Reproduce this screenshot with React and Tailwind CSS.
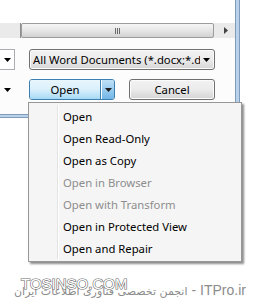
import React from 'react';

const menuItems = [
  { label: 'Open', disabled: false },
  { label: 'Open Read-Only', disabled: false },
  { label: 'Open as Copy', disabled: false },
  { label: 'Open in Browser', disabled: true },
  { label: 'Open with Transform', disabled: true },
  { label: 'Open in Protected View', disabled: false },
  { label: 'Open and Repair', disabled: false },
];

function Caret({ className = '' }) {
  return (
    <svg width="7" height="4" viewBox="0 0 7 4" className={className}>
      <path d="M0 0h7L3.5 4z" fill="currentColor" />
    </svg>
  );
}

export default function App() {
  return (
    <div className="relative h-[306px] w-[261px] overflow-hidden bg-white font-['Noto_Sans',sans-serif] text-[11.3px] leading-none text-black">
      {/* dialog window */}
      <div className="flex w-[240px]">
        <div className="w-[235px] bg-[#fcfcfc]">
          <div className="h-[23px] bg-white" />

          {/* horizontal scrollbar */}
          <div className="flex h-[15px] bg-[#eaeaea]">
            <div className="w-[21px] border-r border-[#8e8e8e]" />
            <div className="flex w-[193px] items-center justify-center rounded-[2px] border border-[#9c9c9c] bg-gradient-to-b from-[#f6f6f6] via-[#e6e6e6] to-[#d2d2d2]">
              <div className="flex gap-[1px]">
                <div className="h-[6px] w-[1px] bg-[#6a6a6a]" />
                <div className="h-[6px] w-[1px] bg-[#6a6a6a]" />
                <div className="h-[6px] w-[1px] bg-[#6a6a6a]" />
              </div>
            </div>
            <div className="flex flex-1 items-center justify-center pl-[2px]">
              <svg width="4" height="7" viewBox="0 0 4 7">
                <path d="M0 0v7l4-3.5z" fill="#444" />
              </svg>
            </div>
          </div>

          {/* file type row */}
          <div className="mt-[11px] flex h-[21px] items-center">
            <div className="flex h-[21px] w-[15px] items-center justify-center border-y border-r border-[#abadb3] bg-white">
              <Caret className="text-black" />
            </div>
            <div className="ml-[14px] flex h-[21px] w-[186px] items-center rounded-[3px] border border-[#707070] bg-gradient-to-b from-[#f3f3f3] via-[#ebebeb] to-[#d6d6d6] pl-[3px] pr-[4px] shadow-[inset_0_0_0_1px_#fbfbfb]">
              <span className="flex-1 overflow-hidden whitespace-nowrap">All Word Documents (*.docx;*.docm;*.dotx)</span>
              <Caret className="ml-[3px] text-black" />
            </div>
          </div>

          {/* buttons row */}
          <div className="mt-[9px] flex h-[21px] items-center">
            <div className="flex w-[15px] justify-center">
              <Caret className="text-black" />
            </div>
            <div className="ml-[14px] flex h-[21px] w-[86px] overflow-hidden rounded-[3px] border border-[#3c7fb1] shadow-[inset_0_0_0_1px_#c4e5f6]">
              <div className="flex flex-1 items-center justify-center bg-gradient-to-b from-[#eaf6fd] via-[#d9f0fc] to-[#a7d9f5]">
                Open
              </div>
              <div className="w-[1px] bg-[#3c7fb1]" />
              <div className="w-[1px] bg-white" />
              <div className="flex w-[12px] items-center justify-center bg-gradient-to-b from-[#bfe1f6] to-[#72b6e6]">
                <Caret className="text-[#1d1d1d]" />
              </div>
            </div>
            <div className="ml-[14px] flex h-[21px] w-[86px] items-center justify-center rounded-[3px] border border-[#707070] bg-gradient-to-b from-[#f2f2f2] via-[#ebebeb] to-[#d4d4d4] shadow-[inset_0_0_0_1px_#fcfcfc]">
              Cancel
            </div>
          </div>

          <div className="h-[14px]" />
        </div>
        <div className="w-[5px] border-x border-[#7f9db9] bg-[#b9d1ea]" />
      </div>
      <div className="h-[4px] w-[240px] border-y border-[#7f9db9] bg-[#b9d1ea]" />

      {/* split button dropdown menu */}
      <div className="absolute left-[28px] top-[102px] w-[214px] border border-[#979797] bg-[#f5f5f5] pb-[1px] pt-[3px] shadow-[2px_2px_2px_rgba(0,0,0,0.45)]">
        <div className="absolute bottom-[2px] left-[28px] top-[2px] w-[1px] bg-[#e2e3e3]" />
        <div className="absolute bottom-[2px] left-[29px] top-[2px] w-[1px] bg-white" />
        {menuItems.map((item) => (
          <div
            key={item.label}
            className={`flex h-[22px] items-center pl-[34px] ${item.disabled ? 'text-[#8d8d8d]' : 'text-black'}`}
          >
            {item.label}
          </div>
        ))}
      </div>

      {/* watermark */}
      <div className="absolute left-[14px] top-[283px] flex items-baseline whitespace-nowrap text-[#8c8c8c]">
        <span dir="rtl" className="font-['DejaVu_Sans',sans-serif] text-[11px]">انجمن تخصصی فناوری اطلاعات ایران</span>
        <span className="ml-[4px] font-['Liberation_Sans',sans-serif] text-[14px]">- ITPro.ir</span>
      </div>
      <div className="absolute left-[21px] top-[276px] font-['Liberation_Sans',sans-serif] text-[15px] text-white [-webkit-text-stroke:1.2px_#6a6a6a] [paint-order:stroke_fill]">
        TOSINSO.COM
      </div>
    </div>
  );
}
